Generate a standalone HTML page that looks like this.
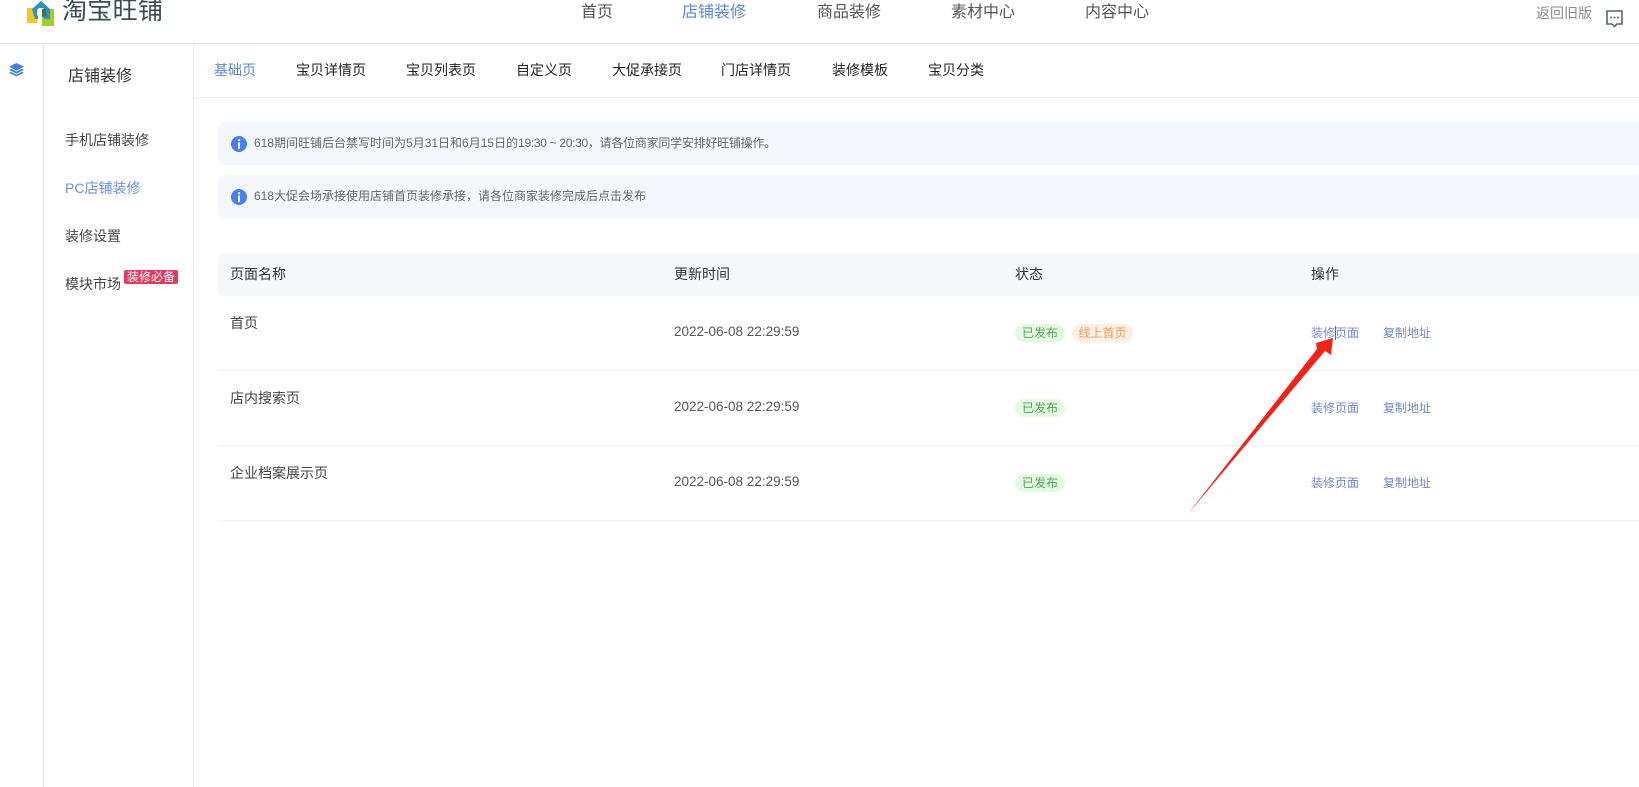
<!DOCTYPE html>
<html lang="zh"><head><meta charset="utf-8"><title>店铺装修</title>
<style>
html,body{margin:0;padding:0;background:#fff}
body{width:1639px;height:787px;position:relative;overflow:hidden;font-family:"Liberation Sans","Noto Sans CJK SC",sans-serif;color:#333}
.t{position:absolute;white-space:nowrap;line-height:20px;height:20px;font-size:14px}
.b{position:absolute}
.nav{font-size:16px;color:#555;top:3px}
.tab{top:60px;color:#222;font-size:14px}
.blue{color:#5b86cc}
.side{left:65px;color:#444;font-size:14px}
.h{top:264px;color:#333}
.date{left:674px;color:#555;font-size:13.5px}
.name{left:230px;color:#444;font-size:14px}
.tag{position:absolute;height:18px;line-height:18px;border-radius:9px;font-size:12px;text-align:center;white-space:nowrap}
.g{left:1015px;width:50px;background:#e5f8e3;color:#4ca84c}
.o{left:1072px;width:61px;background:#fdeee8;color:#e9a04e}
.lnk{font-size:12px;color:#6f86cf}
.notice{position:absolute;left:218px;width:1421px;height:43px;background:#f5f7fc;border-radius:8px 0 0 8px}
.i{position:absolute;left:231px;width:16px;height:16px}
.ntext{left:254px;font-size:12px;color:#666}
.line{position:absolute;left:218px;width:1421px;height:1px;background:#eff0f2}
</style></head><body>

<!-- top bar -->
<svg class="b" style="left:26px;top:0" width="30" height="28" viewBox="0 0 30 28">
<rect x="1" y="8" width="10" height="15" fill="#f5c821"/>
<rect x="16" y="9" width="12" height="17" fill="#a4cb2a"/>
<path d="M6 9 L15 1 L24 9 V19 H18 V11 H12 V19 H9 Z" fill="#2f8fc9"/>
<rect x="11" y="8" width="8" height="9" rx="3" fill="#fff"/>
<rect x="16" y="9" width="4" height="8" fill="#3d7a3a"/>
</svg>
<div class="t" style="left:62px;top:-3px;font-size:25px;line-height:28px;height:28px;color:#3b4a55;letter-spacing:.3px">淘宝旺铺</div>
<div class="t nav" style="left:581px">首页</div>
<div class="t nav blue" style="left:682px">店铺装修</div>
<div class="t nav" style="left:817px">商品装修</div>
<div class="t nav" style="left:951px">素材中心</div>
<div class="t nav" style="left:1085px">内容中心</div>
<div class="t" style="left:1536px;top:3px;color:#8a8a8a;font-size:14px">返回旧版</div>
<svg class="b" style="left:1605px;top:9px" width="19" height="19" viewBox="0 0 19 19">
<path d="M2 2 H17 V15 H12 L9.5 17.5 L7 15 H2 Z" fill="none" stroke="#5f6468" stroke-width="1.6"/>
<circle cx="6" cy="8.5" r="1" fill="#5f6468"/><circle cx="9.5" cy="8.5" r="1" fill="#5f6468"/><circle cx="13" cy="8.5" r="1" fill="#5f6468"/>
</svg>
<div class="b" style="left:0;top:43px;width:1639px;height:1px;background:#dedfe0"></div>

<!-- rail + sidebar -->
<div class="b" style="left:43px;top:44px;width:1px;height:743px;background:#dedfe0"></div>
<div class="b" style="left:193px;top:44px;width:1px;height:743px;background:#e9eaec"></div>
<svg class="b" style="left:8px;top:62px" width="17" height="15" viewBox="0 0 17 15">
<path d="M8.5 1 L16 4.8 L8.5 8.6 L1 4.8 Z" fill="#3f7fe0"/>
<path d="M3 6.9 L1 7.9 L8.5 11.6 L16 7.9 L14 6.9 L8.5 9.6 Z" fill="#3f7fe0"/>
<path d="M3 9.9 L1 10.9 L8.5 14.4 L16 10.9 L14 9.9 L8.5 12.6 Z" fill="#3f7fe0"/>
</svg>
<div class="t" style="left:68px;top:67px;font-size:16px;color:#333">店铺装修</div>
<div class="t side" style="top:130px">手机店铺装修</div>
<div class="t side" style="top:178px;color:#6a8fd3">PC店铺装修</div>
<div class="t side" style="top:226px">装修设置</div>
<div class="t side" style="top:274px">模块市场</div>
<div class="b" style="left:124px;top:270px;width:54px;height:14px;background:#e23a62;border-radius:2px;color:#fff;font-size:12px;line-height:14px;text-align:center;white-space:nowrap">装修必备</div>

<!-- tabs -->
<div class="t tab blue" style="left:214px">基础页</div>
<div class="t tab" style="left:296px">宝贝详情页</div>
<div class="t tab" style="left:406px">宝贝列表页</div>
<div class="t tab" style="left:516px">自定义页</div>
<div class="t tab" style="left:612px">大促承接页</div>
<div class="t tab" style="left:721px">门店详情页</div>
<div class="t tab" style="left:832px">装修模板</div>
<div class="t tab" style="left:928px">宝贝分类</div>
<div class="b" style="left:194px;top:97px;width:1445px;height:1px;background:#e9eaec"></div>

<!-- notices -->
<div class="notice" style="top:122px"></div>
<div class="notice" style="top:175px"></div>
<svg class="i" style="top:136px" viewBox="0 0 16 16"><circle cx="8" cy="8" r="8" fill="#4a80ea"/><circle cx="8" cy="4.2" r="1.1" fill="#fff"/><rect x="7" y="6.5" width="2" height="6.5" fill="#fff"/></svg>
<svg class="i" style="top:189px" viewBox="0 0 16 16"><circle cx="8" cy="8" r="8" fill="#4a80ea"/><circle cx="8" cy="4.2" r="1.1" fill="#fff"/><rect x="7" y="6.5" width="2" height="6.5" fill="#fff"/></svg>
<div class="t ntext" style="top:133px">618期间旺铺后台禁写时间为5月31日和6月15日的<span style="letter-spacing:-.3px">19:30 ~ 20:30</span><span style="letter-spacing:-.25px">，请各位商家同学安排好旺铺操作。</span></div>
<div class="t ntext" style="top:186px">618大促会场承接使用店铺首页装修承接，请各位商家装修完成后点击发布</div>

<!-- table -->
<div class="b" style="left:218px;top:254px;width:1421px;height:42px;background:#f6f7f8;border-radius:6px 0 0 6px"></div>
<div class="t h" style="left:230px">页面名称</div>
<div class="t h" style="left:674px">更新时间</div>
<div class="t h" style="left:1015px">状态</div>
<div class="t h" style="left:1311px">操作</div>

<div class="t name" style="top:313px">首页</div>
<div class="t date" style="top:322px">2022-06-08 22:29:59</div>
<div class="tag g" style="top:324px">已发布</div>
<div class="tag o" style="top:324px">线上首页</div>
<div class="t lnk" style="left:1311px;top:323px">装修页面</div>
<div class="t lnk" style="left:1383px;top:323px">复制地址</div>
<div class="line" style="top:370px"></div>

<div class="t name" style="top:388px">店内搜索页</div>
<div class="t date" style="top:397px">2022-06-08 22:29:59</div>
<div class="tag g" style="top:399px">已发布</div>
<div class="t lnk" style="left:1311px;top:398px">装修页面</div>
<div class="t lnk" style="left:1383px;top:398px">复制地址</div>
<div class="line" style="top:445px"></div>

<div class="t name" style="top:463px">企业档案展示页</div>
<div class="t date" style="top:472px">2022-06-08 22:29:59</div>
<div class="tag g" style="top:474px">已发布</div>
<div class="t lnk" style="left:1311px;top:473px">装修页面</div>
<div class="t lnk" style="left:1383px;top:473px">复制地址</div>
<div class="line" style="top:520px"></div>

<!-- arrow -->
<div class="b" style="left:1335px;top:326px;width:1px;height:14px;background:#5a6a9a"></div>
<svg class="b" style="left:0;top:0" width="1639" height="787" viewBox="0 0 1639 787">
<polygon points="1187,515 1317,349 1316,343 1333,338 1331,355 1325,351" fill="#f0231a"/>
</svg>
</body></html>
